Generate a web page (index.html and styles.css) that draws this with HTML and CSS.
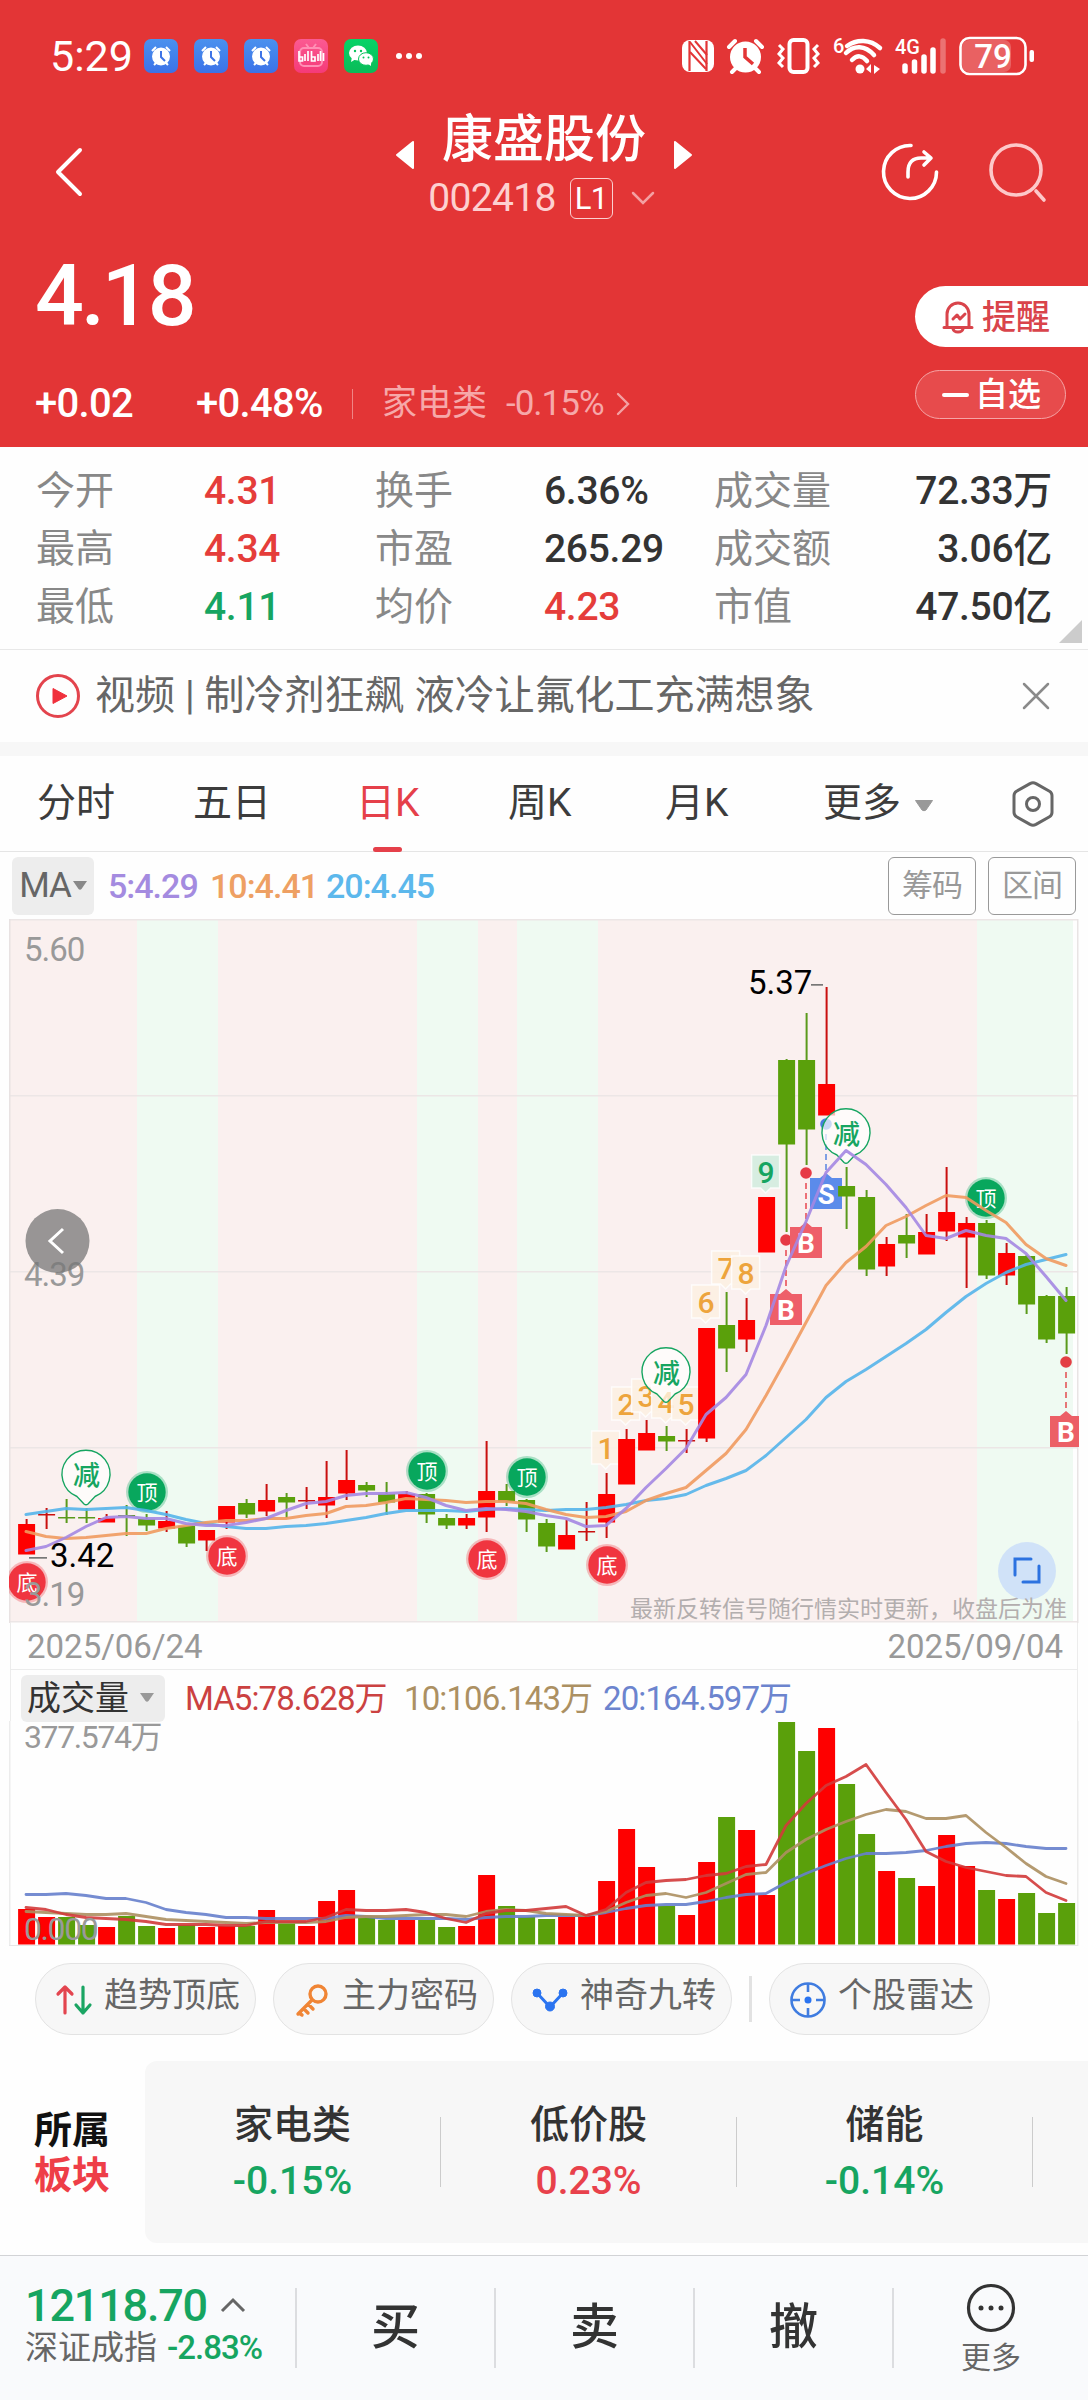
FILE: index.html
```html
<!DOCTYPE html>
<html lang="zh-CN">
<head>
    <meta charset="utf-8">
    <title>康盛股份 002418</title>
    <link rel="stylesheet" href="styles.css">
</head>
<body>
    <header class="header">
        <!-- System status bar -->
        <div class="status-bar">
            <span class="clock">5:29</span>
            <div class="apps">
                <svg class="app app-alarm" viewBox="0 0 34 34"><circle cx="17" cy="17.5" r="9" fill="#fff"/><path d="M8 12l4-4M26 12l-4-4M10 26l3-3M24 26l-3-3" stroke="#fff" stroke-width="2"/><path d="M17 12v6l4 4" fill="none" stroke="#3f74e6" stroke-width="2"/></svg>
                <svg class="app app-alarm" viewBox="0 0 34 34"><circle cx="17" cy="17.5" r="9" fill="#fff"/><path d="M8 12l4-4M26 12l-4-4M10 26l3-3M24 26l-3-3" stroke="#fff" stroke-width="2"/><path d="M17 12v6l4 4" fill="none" stroke="#3f74e6" stroke-width="2"/></svg>
                <svg class="app app-alarm" viewBox="0 0 34 34"><circle cx="17" cy="17.5" r="9" fill="#fff"/><path d="M8 12l4-4M26 12l-4-4M10 26l3-3M24 26l-3-3" stroke="#fff" stroke-width="2"/><path d="M17 12v6l4 4" fill="none" stroke="#3f74e6" stroke-width="2"/></svg>
                <svg class="app app-bili" viewBox="0 0 34 34"><rect x="6" y="9" width="22" height="18" rx="4" fill="none" stroke="#ff8fb5" stroke-width="2"/><path d="M12 5l3 4M22 5l-3 4" stroke="#ff8fb5" stroke-width="2"/><path d="M5 12v10h3.500v-4H5M11 15v7M14 12v10M17.500 12v10h3.500v-4h-3.500M24 15v7M26.500 12v10M29.500 14v8" fill="none" stroke="#fff" stroke-width="1.700"/></svg>
                <svg class="app app-wechat" viewBox="0 0 34 34"><ellipse cx="14" cy="14" rx="9" ry="7.500" fill="#fff"/><path d="M8 18l-1 5 5-3z" fill="#fff"/><ellipse cx="22" cy="20" rx="7.500" ry="6.300" fill="#fff" stroke="#08c45c"/><path d="M24 25l3 2v-4z" fill="#fff"/><circle cx="11" cy="12" r="1.200" fill="#08c45c"/><circle cx="17" cy="12" r="1.200" fill="#08c45c"/><circle cx="19.500" cy="18.500" r="1" fill="#08c45c"/><circle cx="24.500" cy="18.500" r="1" fill="#08c45c"/></svg>
                <svg width="26" height="34" viewBox="0 0 26 34" fill="#fff"><circle cx="5" cy="17" r="3"/><circle cx="15" cy="17" r="3"/><circle cx="25" cy="17" r="3"/></svg>
            </div>
            <div class="system">
                <svg width="32" height="34" viewBox="0 0 32 34"><rect y="1" width="32" height="32" rx="8" fill="#fff"/><path d="M7.500 2v30M24.500 2v30" stroke="#e33536" stroke-width="2.200"/><path d="M8 3l17 22M8 13l16 17M13 2l12 14" fill="none" stroke="#e33536" stroke-width="2"/></svg>
                <svg width="37" height="38" viewBox="0 0 37 38"><circle cx="18.500" cy="20" r="15.500" fill="#fff"/><path d="M2 10l6-6M35 10l-6-6M5 35l4-4M32 35l-4-4" stroke="#fff" stroke-width="4" stroke-linecap="round"/><path d="M18 11v9l8 7" fill="none" stroke="#e33536" stroke-width="3.500"/></svg>
                <svg width="43" height="38" viewBox="0 0 43 38" fill="none" stroke="#fff"><rect x="12.500" y="3" width="18" height="32" rx="4" stroke-width="4"/><path d="M2 8l4 4-4 5 4 4-4 5 4 4M41 8l-4 4 4 5-4 4 4 5-4 4" stroke-width="3"/></svg>
                <svg width="49" height="40" viewBox="0 0 49 40" fill="none" stroke="#fff" stroke-width="4.500" stroke-linecap="round"><path d="M14 10c10-7 23-7 33 2M13 17c8-8 19-8 28 2M19 24c5-5 10-5 15 1"/><circle cx="27" cy="33" r="4.500" fill="#fff" stroke="none"/><path d="M33 33l5-5v9zM41 29l6 4-6 5z" fill="#fff" stroke="none"/><text class="tiny" x="0" y="17">6</text></svg>
                <svg width="51" height="40" viewBox="0 0 51 40" fill="none" stroke="#fff" stroke-width="5.500" stroke-linecap="round"><path d="M10 30v5M19.500 26v9M29 21v14M38 14v21"/><path d="M48 5v30" stroke-opacity=".3"/><text class="tiny" x="0" y="18">4G</text></svg>
                <svg width="76" height="40" viewBox="0 0 76 40"><rect x="3" y="4" width="49" height="32" rx="7" fill="#fff" fill-opacity=".22"/><rect x="1.500" y="2" width="65" height="36" rx="9" fill="none" stroke="#fff" stroke-width="2.600"/><rect x="70.500" y="14" width="4.500" height="12" rx="2" fill="#fff"/><text class="battery" x="34" y="31.500">79</text></svg>
            </div>
        </div>

        <!-- Stock name and navigation -->
        <div class="title-bar">
            <svg class="back" width="28" height="48" viewBox="0 0 28 48"><path d="M25 2L3 24l22 22" fill="none" stroke="#fff" stroke-width="4" stroke-linecap="round" stroke-linejoin="round"/></svg>
            <div class="stock">
                <div class="stock-name">
                    <svg width="18" height="28" viewBox="0 0 18 28"><path d="M17 1v26L1 14z" fill="#fff" stroke="#fff" stroke-width="2" stroke-linejoin="round"/></svg>
                    <span>康盛股份</span>
                    <svg width="18" height="28" viewBox="0 0 18 28"><path d="M1 1v26l16-13z" fill="#fff" stroke="#fff" stroke-width="2" stroke-linejoin="round"/></svg>
                </div>
                <div class="stock-code">
                    <span>002418</span>
                    <span class="level">L1</span>
                    <svg width="24" height="14" viewBox="0 0 24 14"><path d="M2 2l10 10L22 2" fill="none" stroke="#f4a0a2" stroke-width="2.500" stroke-linecap="round"/></svg>
                </div>
            </div>
            <div class="tools">
                <svg width="58" height="60" viewBox="0 0 58 60" fill="none" stroke="#fff" stroke-width="3.600" stroke-linecap="round" stroke-linejoin="round"><path d="M30 3.500A26.500 26.500 0 1 0 55.500 30"/><path d="M27 35v-5c0-10 5-14 13-14h9M43 10l7 6-7 7"/></svg>
                <svg width="58" height="60" viewBox="0 0 58 60" fill="none" stroke="#fdc8c9" stroke-width="3.600" stroke-linecap="round"><circle cx="27" cy="28" r="25"/><path d="M47 49l8 9"/></svg>
            </div>
        </div>

        <!-- Price -->
        <div class="quote">
            <div class="quote-left">
                <div class="price">4.18</div>
                <div class="change">
                    <span class="diff">+0.02</span>
                    <span class="percent">+0.48%</span>
                    <span class="industry">家电类</span>
                    <span class="industry-percent">-0.15%</span>
                    <svg width="14" height="24" viewBox="0 0 14 24"><path d="M2 2l10 10L2 22" fill="none" stroke="#f3a1a3" stroke-width="2.400" stroke-linecap="round"/></svg>
                </div>
            </div>
            <div class="quote-right">
                <div class="remind">
                    <svg width="32" height="34" viewBox="0 0 32 34" fill="none" stroke="#d9444b" stroke-width="3" stroke-linejoin="round" stroke-linecap="round"><path d="M5 27V14a11 11 0 0 1 22 0v13M2 27.500h28M11 29c1 4 9 4 10 0M11 19l4-4 3 4 5-5"/></svg>
                    <span>提醒</span>
                </div>
                <div class="favorite"><i class="minus"></i><span>自选</span></div>
            </div>
        </div>
    </header>

    <section class="stats">
        <span class="label">今开</span><span class="up">4.31</span>
        <span class="label">换手</span><span>6.36%</span>
        <span class="label">成交量</span><span class="last">72.33万</span>
        <span class="label">最高</span><span class="up">4.34</span>
        <span class="label">市盈</span><span>265.29</span>
        <span class="label">成交额</span><span class="last">3.06亿</span>
        <span class="label">最低</span><span class="down">4.11</span>
        <span class="label">均价</span><span class="up">4.23</span>
        <span class="label">市值</span><span class="last">47.50亿</span>
        <i class="corner"></i>
    </section>

    <section class="news">
        <svg width="46" height="46" viewBox="0 0 46 46"><circle cx="23" cy="23" r="20.500" fill="none" stroke="#e3444d" stroke-width="3"/><path d="M18 15.500v15L32 23z" fill="#f0303c" stroke="#f0303c" stroke-linejoin="round"/></svg>
        <span class="news-text">视频 | 制冷剂狂飙 液冷让氟化工充满想象</span>
        <svg width="28" height="28" viewBox="0 0 28 28"><path d="M2 2l24 24M26 2L2 26" stroke="#8a8a8a" stroke-width="2.500" stroke-linecap="round"/></svg>
    </section>

    <nav class="tabs">
        <span>分时</span>
        <span>五日</span>
        <span class="active">日K</span>
        <span>周K</span>
        <span>月K</span>
        <span>更多 <svg width="20" height="13" viewBox="0 0 20 13"><path d="M1.500 1.500h17L12 11q-2 1.500-4 0z" fill="#999" stroke="#999" stroke-linejoin="round"/></svg></span>
        <svg class="gear" width="42" height="46" viewBox="0 0 42 46" fill="none" stroke="#666" stroke-width="3" stroke-linejoin="round"><path d="M18 2.600q3-1.500 6 0l13.500 7.700q2.500 1.500 2.500 4.500v16.400q0 3-2.500 4.500L24 43.400q-3 1.500-6 0L4.500 35.700Q2 34.200 2 31.200V14.800q0-3 2.500-4.500z"/><circle cx="21" cy="23" r="6.500"/></svg>
    </nav>

    <div class="ma-bar">
        <span class="ma-button">MA<svg width="14" height="10" viewBox="0 0 14 10"><path d="M0 0h14L8.500 8q-1.500 1.500-3 0z" fill="#888"/></svg></span>
        <span class="ma5">5:4.29</span>
        <span class="ma10">10:4.41</span>
        <span class="ma20">20:4.45</span>
        <span class="box-button">筹码</span>
        <span class="box-button">区间</span>
    </div>

    <!-- Candlestick chart, drawn by chart.js -->
    <svg class="kline" id="kline" viewBox="0 919 1088 704"></svg>

    <div class="dates"><span>2025/06/24</span><span>2025/09/04</span></div>

    <div class="volume-bar">
        <span class="volume-button">成交量<svg width="14" height="10" viewBox="0 0 14 10"><path d="M0 0h14L8.500 8q-1.500 1.500-3 0z" fill="#999"/></svg></span>
        <span class="vol5">MA5:78.628万</span>
        <span class="vol10">10:106.143万</span>
        <span class="vol20">20:164.597万</span>
    </div>
    <svg class="volume" id="volume" viewBox="0 1721 1088 226"></svg>

    <div class="chips">
        <span class="chip">
            <svg width="36" height="30" viewBox="0 0 36 30" fill="none" stroke-width="3.200" stroke-linecap="round" stroke-linejoin="round"><path d="M9 28V2M2 9l7-7 7 7" stroke="#e3454f"/><path d="M27 2v26M20 20l7 8 7-8" stroke="#1aa563"/></svg>
            趋势顶底
        </span>
        <span class="chip">
            <svg width="36" height="34" viewBox="0 0 36 34" fill="none" stroke="#f08535" stroke-width="3.400" stroke-linecap="round"><circle cx="24" cy="11" r="8"/><path d="M18 17L4 31M10 26l4 4M14 21l5 5M5 30l3 2"/></svg>
            主力密码
        </span>
        <span class="chip">
            <svg width="36" height="24" viewBox="0 0 36 24" fill="#2b74f0" stroke="#2b74f0"><path d="M5 5l13 14L31 5" fill="none" stroke-width="3"/><circle cx="5" cy="5" r="4"/><circle cx="18" cy="18.500" r="4.500"/><circle cx="31" cy="5" r="4"/></svg>
            神奇九转
        </span>
        <i class="chip-line"></i>
        <span class="chip">
            <svg width="36" height="36" viewBox="0 0 36 36" fill="none" stroke="#3f7ce0" stroke-width="2.600"><circle cx="18" cy="18" r="16.500"/><path d="M18 2v8M18 26v8M2 18h8M26 18h8"/><circle cx="18" cy="18" r="3.500" fill="#2b74f0" stroke="none"/></svg>
            个股雷达
        </span>
    </div>

    <section class="sectors">
        <div class="sectors-title"><div>所属</div><div class="red">板块</div></div>
        <div class="sectors-list">
            <div class="sector"><span>家电类</span><span class="down">-0.15%</span></div>
            <div class="sector"><span>低价股</span><span class="red">0.23%</span></div>
            <div class="sector"><span>储能</span><span class="down">-0.14%</span></div>
        </div>
    </section>

    <footer class="footer">
        <div class="index">
            <div class="index-value">12118.70 <svg width="26" height="16" viewBox="0 0 26 16"><path d="M2 14L13 3l11 11" fill="none" stroke="#666" stroke-width="3"/></svg></div>
            <div class="index-name">深证成指<span>-2.83%</span></div>
        </div>
        <div class="trade">买</div>
        <div class="trade">卖</div>
        <div class="trade">撤</div>
        <div class="more">
            <svg width="50" height="50" viewBox="0 0 50 50"><circle cx="25" cy="25" r="22.500" fill="none" stroke="#333" stroke-width="3.200"/><circle cx="15" cy="25" r="2.500" fill="#333"/><circle cx="25" cy="25" r="2.500" fill="#333"/><circle cx="35" cy="25" r="2.500" fill="#333"/></svg>
            <span>更多</span>
        </div>
    </footer>
    <script src="chart.js"></script>
</body>
</html>
```
FILE: styles.css
```css
* {
    box-sizing: border-box;
}
body {
    margin: 0;
    width: 1088px;
    height: 2400px;
    overflow: hidden;
    background: #fefefe;
    color: #333;
    font-family: Roboto, "Noto Sans CJK SC", sans-serif;
    font-size: 39px;
    line-height: 1;
}
svg {
    display: block;
    flex: none;
    overflow: visible;
}
span {
    white-space: nowrap;
}
.up {
    color: #e53d3a;
}
.down {
    color: #16a561;
}
.red {
    color: #e8414b;
}

/* Red header */
.header {
    height: 447px;
    background: #e33536;
    color: #fff;
}
.status-bar {
    display: flex;
    align-items: center;
    height: 112px;
    padding: 0 53px 0 50px;
}
.clock {
    width: 94px;
    font-size: 43px;
}
.apps {
    display: flex;
    gap: 16px;
}
.app {
    width: 34px;
    height: 34px;
    border-radius: 7px;
}
.app-alarm {
    background: linear-gradient(#4a91ee, #3b72e8);
}
.app-bili {
    background: linear-gradient(#fb5a92, #f53a78);
}
.app-wechat {
    background: linear-gradient(#06d367, #0abb58);
}
.system {
    display: flex;
    align-items: center;
    gap: 13px;
    margin-left: auto;
}
.tiny {
    font-size: 20px;
    font-weight: 500;
    fill: #fff;
    stroke: none;
}
.battery {
    font-size: 33px;
    font-weight: 500;
    fill: #fff;
    text-anchor: middle;
}
.title-bar {
    display: grid;
    grid-template-columns: 300px 488px 300px;
    height: 110px;
}
.back {
    margin: 36px 0 0 55px;
}
.stock-name {
    display: flex;
    justify-content: center;
    align-items: center;
    gap: 28px;
    height: 54px;
    font-size: 51px;
    font-weight: 500;
}
.stock-name svg {
    margin-top: 32px;
}
.stock-code {
    display: flex;
    align-items: center;
    justify-content: center;
    height: 64px;
    padding-right: 5px;
    color: #fdd0d0;
    font-size: 39px;
    letter-spacing: -.7px;
}
.level {
    width: 43px;
    height: 41px;
    margin: 0 18px 0 14px;
    border: 1.5px solid #fbd0d0;
    border-radius: 6px;
    color: #fff;
    font-size: 31px;
    line-height: 39px;
    text-align: center;
}
.tools {
    display: flex;
    gap: 50px;
    padding: 30px 0 0 93px;
}
.quote {
    display: flex;
    justify-content: space-between;
    height: 225px;
}
.quote-left {
    padding-left: 35px;
}
.price {
    height: 144px;
    font-size: 86px;
    font-weight: 500;
    line-height: 148px;
    letter-spacing: -3px;
}
.change {
    display: flex;
    align-items: center;
    height: 75px;
    font-size: 40px;
    font-weight: 500;
    letter-spacing: -.7px;
}
.diff {
    width: 161px;
}
.percent {
    width: 157px;
    border-right: 1px solid #f08585;
    line-height: 30px;
}
.industry {
    margin-left: 29px;
    color: #f6a8a9;
    font-size: 35px;
    font-weight: 400;
    letter-spacing: 0;
}
.industry-percent {
    margin: 0 12px 0 19px;
    color: #f6a8a9;
    font-size: 35px;
    font-weight: 400;
    letter-spacing: -1px;
}
.quote-right {
    width: 173px;
    padding-top: 64px;
}
.remind {
    display: flex;
    align-items: center;
    gap: 8px;
    height: 61px;
    padding-left: 27px;
    border-radius: 31px 0 0 31px;
    background: #fff;
    color: #d9444b;
    font-size: 34px;
    font-weight: 500;
}
.favorite {
    display: flex;
    align-items: center;
    width: 151px;
    height: 49px;
    margin-top: 23px;
    padding-left: 26px;
    gap: 6px;
    border: 1px solid #f5a5a6;
    border-radius: 25px;
    background: #e74b4c;
    font-size: 33px;
    font-weight: 500;
}
.minus {
    width: 27px;
    height: 4px;
    border-radius: 2px;
    background: #fff;
}

/* Key numbers */
.stats {
    position: relative;
    display: grid;
    grid-template-columns: 168px 171px 169px 170px 130px 1fr;
    grid-auto-rows: 58px;
    align-items: center;
    height: 202px;
    padding: 15px 36px 0 36px;
    font-weight: 500;
    letter-spacing: -.3px;
}
.stats .label {
    color: #888;
    font-weight: 400;
    letter-spacing: 0;
}
.stats .last {
    text-align: right;
}
.corner {
    position: absolute;
    right: 6px;
    bottom: 6px;
    border-left: 23px solid transparent;
    border-bottom: 23px solid #ccc;
}

/* News line */
.news {
    display: flex;
    align-items: center;
    height: 107px;
    padding: 0 38px 0 35px;
    border-top: 1px solid #e8e8e8;
    border-bottom: 14px solid #f7f7f7;
    color: #666;
    font-size: 40px;
}
.news-text {
    margin: 0 auto 0 14px;
}

/* Period tabs */
.tabs {
    display: grid;
    grid-template-columns: 156px 163px 152px 157px 158px 190px auto;
    align-items: center;
    height: 96px;
    padding-left: 37px;
    border-bottom: 1px solid #e5e5e5;
    color: #3c3c3c;
}
.tabs span svg {
    display: inline-block;
    margin-left: 3px;
    vertical-align: 4px;
}
.tabs .active {
    position: relative;
    color: #e5404a;
}
.active::after {
    content: "";
    position: absolute;
    left: 17px;
    bottom: -29px;
    width: 29px;
    height: 5px;
    border-radius: 3px;
    background: #e5404a;
}
.gear {
    margin-left: -1px;
}

/* Moving average line */
.ma-bar {
    display: flex;
    align-items: center;
    height: 67px;
    padding: 0 12px;
    font-size: 34px;
    font-weight: 500;
    letter-spacing: -1px;
}
.ma-button {
    display: flex;
    align-items: center;
    justify-content: center;
    gap: 2px;
    width: 82px;
    height: 58px;
    margin-right: 14px;
    border-radius: 6px;
    background: #ededed;
    color: #666;
    font-size: 35px;
    font-weight: 400;
}
.ma5 {
    width: 102px;
    color: #a48be0;
}
.ma10 {
    width: 116px;
    color: #eea063;
}
.ma20 {
    margin-right: auto;
    color: #5cb8ec;
}
.box-button {
    width: 88px;
    height: 58px;
    margin-left: 12px;
    border: 1px solid #999;
    border-radius: 6px;
    color: #999;
    font-size: 31px;
    font-weight: 400;
    line-height: 55px;
    text-align: center;
}

/* Charts */
.kline {
    width: 1088px;
    height: 704px;
}
.kline text,
.volume text {
    font-size: 33px;
}
.axis {
    fill: #999;
    letter-spacing: -1px;
}
.kline .notice {
    fill: #b3aeae;
    font-size: 23px;
    text-anchor: end;
}
.kline .dot-text {
    fill: #fff;
    font-size: 21px;
    text-anchor: middle;
}
.kline .pin-text {
    fill: #16a561;
    font-size: 27px;
    font-weight: 500;
    text-anchor: middle;
}
.kline .count {
    font-size: 30px;
    font-weight: 500;
    text-anchor: middle;
}
.kline .trade-mark {
    fill: #fff;
    font-size: 28px;
    font-weight: 700;
    text-anchor: middle;
}
.dates,
.volume-bar {
    width: 1068px;
    margin-left: 10px;
    border: solid #ececec;
}
.dates {
    display: flex;
    justify-content: space-between;
    align-items: center;
    height: 46px;
    padding: 0 14px 0 16px;
    border-width: 0 1px;
    color: #999;
    font-size: 33px;
}
.volume-bar {
    display: flex;
    align-items: center;
    height: 52px;
    border-width: 1px 1px 0;
    padding: 5px 0 0 10px;
    font-size: 33px;
    letter-spacing: -.9px;
}
.volume-button {
    display: flex;
    align-items: center;
    gap: 11px;
    width: 144px;
    height: 47px;
    padding-left: 6px;
    margin-right: 20px;
    border-radius: 6px;
    background: #ededed;
    font-size: 34px;
    letter-spacing: 0;
}
.vol5 {
    width: 219px;
    color: #cb4141;
}
.vol10 {
    width: 199px;
    color: #ac9062;
}
.vol20 {
    color: #6c84ce;
}
.volume {
    width: 1088px;
    height: 226px;
}
.volume .axis {
    font-size: 32px;
    letter-spacing: -1.4px;
}

/* Feature chips */
.chips {
    display: flex;
    align-items: center;
    gap: 17px;
    height: 72px;
    margin-top: 16px;
    padding-left: 35px;
}
.chip {
    display: flex;
    align-items: center;
    gap: 12px;
    width: 221px;
    height: 72px;
    padding: 0 0 8px 20px;
    border: 1px solid #e3e3e3;
    border-radius: 36px;
    background: #f7f7f7;
    color: #666;
    font-size: 34px;
}
.chip svg {
    position: relative;
    top: 5px;
}
.chip-line {
    width: 3px;
    height: 46px;
    background: #e2e2e2;
}

/* Sectors */
.sectors {
    display: flex;
    height: 182px;
    margin-top: 26px;
}
.sectors-title {
    width: 145px;
    padding: 47px 0 0 34px;
    color: #111;
    font-size: 38px;
    font-weight: 700;
    line-height: 45px;
}
.sectors-title .red {
    color: #ee3e48;
}
.sectors-list {
    display: flex;
    flex: 1;
    align-items: center;
    border-radius: 12px 0 0 12px;
    background: #f7f7f7;
}
.sector {
    display: flex;
    flex-direction: column;
    justify-content: center;
    align-items: center;
    gap: 17px;
    width: 296px;
    height: 70px;
    padding-top: 2px;
    border-right: 1px solid #ccc;
    font-weight: 500;
}

/* Bottom bar */
.footer {
    display: flex;
    align-items: center;
    height: 145px;
    margin-top: 12px;
    border-top: 1px solid #d2d3d6;
    background: #f9fafc;
}
.index {
    width: 297px;
    height: 80px;
    padding-left: 25px;
    border-right: 2px solid #dcdde0;
}
.index-value {
    display: flex;
    align-items: center;
    gap: 13px;
    height: 34px;
    color: #16a561;
    font-size: 45px;
    font-weight: 500;
    letter-spacing: -1.2px;
}
.index-name {
    display: flex;
    align-items: center;
    gap: 10px;
    margin-top: 9px;
    color: #666;
    font-size: 33px;
}
.index-name span {
    color: #16a561;
    font-weight: 500;
    letter-spacing: -1px;
}
.trade {
    width: 199px;
    height: 80px;
    border-right: 2px solid #dcdde0;
    font-size: 49px;
    font-weight: 500;
    line-height: 80px;
    text-align: center;
}
.more {
    display: flex;
    flex-direction: column;
    align-items: center;
    gap: 10px;
    width: 194px;
    color: #666;
    font-size: 30px;
}
```
FILE: chart.js
```js
// [color, wick top, body top, body bottom, wick bottom]
var candles = [
    ['r', 1519, 1524, 1554, 1554], ['r', 1508, 1514, 1516, 1529], ['g', 1499, 1517, 1519, 1523],
    ['g', 1508, 1517, 1519, 1523], ['r', 1514, 1518, 1522, 1522], ['g', 1505, 1515, 1517, 1536],
    ['g', 1514, 1519, 1525, 1531], ['r', 1511, 1521, 1528, 1532], ['g', 1526, 1526, 1543, 1547],
    ['r', 1530, 1530, 1540, 1551], ['r', 1506, 1506, 1522, 1529], ['g', 1499, 1503, 1514, 1518],
    ['r', 1484, 1500, 1511, 1516], ['g', 1493, 1497, 1502, 1518], ['r', 1487, 1500, 1502, 1509],
    ['r', 1461, 1497, 1505, 1518], ['r', 1450, 1480, 1493, 1500], ['g', 1482, 1485, 1490, 1497],
    ['g', 1482, 1494, 1502, 1515], ['r', 1491, 1494, 1509, 1509], ['g', 1493, 1494, 1514, 1523],
    ['g', 1514, 1518, 1525, 1529], ['r', 1514, 1518, 1525, 1529], ['r', 1441, 1491, 1517, 1532],
    ['g', 1484, 1491, 1501, 1506], ['g', 1499, 1500, 1519, 1532], ['g', 1519, 1523, 1546, 1552],
    ['r', 1520, 1535, 1549, 1549], ['r', 1502, 1531, 1533, 1541], ['r', 1473, 1494, 1522, 1538],
    ['r', 1429, 1439, 1484, 1484], ['r', 1420, 1433, 1450, 1450], ['g', 1426, 1436, 1441, 1451],
    ['r', 1429, 1440, 1442, 1453], ['r', 1328, 1328, 1438, 1442], ['g', 1292, 1325, 1348, 1372],
    ['r', 1298, 1320, 1339, 1352], ['r', 1197, 1197, 1252, 1252], ['g', 1059, 1060, 1144, 1232],
    ['g', 1013, 1060, 1129, 1165], ['r', 987, 1084, 1115, 1115], ['g', 1167, 1186, 1196, 1229],
    ['g', 1190, 1197, 1269, 1276], ['r', 1237, 1244, 1266, 1276], ['g', 1214, 1235, 1243, 1258],
    ['r', 1214, 1232, 1254, 1254], ['r', 1167, 1212, 1231, 1241], ['r', 1217, 1223, 1237, 1288],
    ['g', 1220, 1223, 1275, 1279], ['r', 1243, 1253, 1275, 1285], ['g', 1255, 1256, 1304, 1314],
    ['g', 1295, 1296, 1339, 1343], ['g', 1287, 1296, 1333, 1354]
];
var ma5 = [1550, 1546, 1537, 1526, 1517, 1516, 1518, 1518, 1523, 1525, 1525, 1522, 1518, 1510, 1503, 1501, 1495, 1493, 1493, 1492, 1497, 1505, 1510, 1508, 1509, 1511, 1515, 1518, 1526, 1525, 1508, 1487, 1468, 1448, 1414, 1397, 1374, 1325, 1266, 1221, 1172, 1150, 1164, 1184, 1207, 1235, 1238, 1230, 1235, 1238, 1253, 1276, 1300];
var ma10 = [1531, 1536, 1538, 1537, 1535, 1533, 1533, 1528, 1525, 1522, 1520, 1520, 1518, 1518, 1515, 1513, 1506, 1505, 1502, 1498, 1499, 1500, 1502, 1501, 1501, 1503, 1509, 1514, 1517, 1516, 1511, 1500, 1493, 1487, 1470, 1453, 1429, 1395, 1359, 1322, 1285, 1262, 1246, 1225, 1216, 1205, 1195, 1197, 1210, 1222, 1244, 1258, 1265];
var ma20 = [1514, 1511, 1508, 1509, 1508, 1507, 1510, 1514, 1519, 1523, 1526, 1528, 1528, 1526, 1525, 1523, 1520, 1517, 1513, 1510, 1510, 1510, 1511, 1509, 1508, 1509, 1510, 1509, 1509, 1507, 1504, 1500, 1498, 1494, 1485, 1478, 1470, 1455, 1437, 1419, 1397, 1381, 1369, 1356, 1343, 1329, 1312, 1296, 1283, 1272, 1264, 1259, 1254];

// tops of the volume bars, the axis is at 1945
var volumes = [1909, 1917, 1917, 1925, 1927, 1916, 1926, 1928, 1925, 1927, 1926, 1926, 1910, 1923, 1926, 1901, 1890, 1918, 1920, 1920, 1920, 1927, 1926, 1875, 1906, 1917, 1919, 1917, 1916, 1881, 1829, 1867, 1906, 1915, 1862, 1817, 1830, 1895, 1722, 1751, 1728, 1784, 1834, 1871, 1878, 1886, 1835, 1866, 1890, 1899, 1893, 1913, 1903];
var vol5 = [1907, 1909, 1914, 1917, 1918, 1919, 1921, 1924, 1924, 1924, 1925, 1925, 1921, 1921, 1921, 1917, 1909, 1910, 1910, 1909, 1912, 1918, 1922, 1913, 1910, 1910, 1908, 1906, 1915, 1909, 1892, 1882, 1880, 1879, 1875, 1873, 1866, 1864, 1825, 1803, 1785, 1776, 1764, 1792, 1819, 1851, 1861, 1867, 1871, 1875, 1876, 1892, 1900];
var vol10 = [1911, 1912, 1913, 1914, 1914, 1913, 1916, 1919, 1920, 1921, 1922, 1923, 1922, 1922, 1922, 1921, 1917, 1916, 1916, 1915, 1914, 1914, 1916, 1911, 1909, 1910, 1913, 1914, 1915, 1911, 1902, 1895, 1893, 1897, 1892, 1883, 1874, 1872, 1852, 1839, 1829, 1821, 1814, 1809, 1811, 1818, 1818, 1815, 1832, 1847, 1863, 1876, 1883];
var vol20 = [1894, 1894, 1893, 1895, 1898, 1898, 1902, 1909, 1912, 1914, 1917, 1917, 1918, 1918, 1918, 1918, 1915, 1916, 1918, 1918, 1918, 1918, 1919, 1917, 1916, 1916, 1915, 1915, 1915, 1912, 1908, 1905, 1904, 1904, 1901, 1897, 1894, 1893, 1882, 1873, 1865, 1858, 1853, 1853, 1852, 1850, 1846, 1843, 1842, 1843, 1846, 1848, 1848];

function x(i) {
    return 26.6 + i * 20;
}

function rect(left, top, width, height, fill) {
    return '<rect x="' + left + '" y="' + top + '" width="' + width + '" height="' + height + '" fill="' + fill + '"/>';
}

function text(cls, left, top, value, fill) {
    return '<text class="' + cls + '" x="' + left + '" y="' + top + '"' + (fill ? ' fill="' + fill + '"' : '') + '>' + value + '</text>';
}

function line(values, color, width) {
    var points = values.map(function (y, i) {
        return (26 + i * 20) + ',' + (y + .5);
    });
    return '<polyline points="' + points.join(' ') + '" fill="none" stroke="' + color + '" stroke-width="' + width + '" stroke-linejoin="round" stroke-linecap="round" stroke-opacity=".9"/>';
}

// round 顶 / 底 badge
function badge(cx, cy, label, color) {
    return '<circle cx="' + cx + '" cy="' + cy + '" r="21" fill="' + color + '" fill-opacity=".3"/>' +
        '<circle cx="' + cx + '" cy="' + cy + '" r="18.7" fill="' + color + '"/>' +
        text('dot-text', cx, cy + 8, label);
}

// 减 pin with a tip under it
function pin(cx, cy) {
    return '<path d="M' + (cx - 9) + ' ' + (cy + 22.5) + 'A24 24 0 1 1 ' + (cx + 9) + ' ' + (cy + 22.5) + 'L' + (cx + 2) + ' ' + (cy + 30) + 'q-2 1.500 -4 0z" fill="#fff" fill-opacity=".7" stroke="#16a561" stroke-width="1.4"/>' +
        text('pin-text', cx + .5, cy + 11, '减');
}

// numbered label of the nine-count
function count(i, tip, green) {
    var left = x(i) - 15, top = tip - 38;
    return '<path d="M' + left + ' ' + top + 'h28v33h-9l-5 5-5-5h-9z" fill="' + (green ? '#d3ecdf' : '#fcefe2') + '" stroke="#fff" stroke-opacity=".8" stroke-width="1.5" fill-opacity=".9"/>' +
        text('count', x(i) - .5, top + 27.5, i - 28, green ? '#16a561' : '#eda43c');
}

// B / S mark with a dashed line to its dot
function mark(cx, dot, top, label, color, dotColor) {
    return '<path d="M' + cx + ' ' + (dot + 10) + 'V' + (top - 6) + '" stroke="' + dotColor + '" stroke-width="1.4" stroke-dasharray="6 4"/>' +
        '<circle cx="' + cx + '" cy="' + dot + '" r="5.800" fill="' + dotColor + '"/>' +
        '<path d="M' + (cx - 16) + ' ' + top + 'h10l6-5 6 5h10v31h-32z" fill="' + color + '"/>' +
        text('trade-mark', cx, top + 26, label);
}

function drawKline() {
    var out = rect(10, 919, 1063, 703, '#faf0ef');
    [[137, 218], [417, 478], [517, 598], [977, 1073]].forEach(function (band) {
        out += rect(band[0], 919, band[1] - band[0], 703, '#effaf2');
    });
    [919, 1095, 1271, 1447, 1621].forEach(function (y) {
        out += rect(10, y, 1068, 1.5, '#ece6e6');
    });
    out += rect(9, 919, 1.5, 704, '#e8e2e2') + rect(1077, 919, 1.5, 704, '#e8e4e4');
    out += text('axis', 24, 961, '5.60') + text('axis', 24, 1286, '4.39');

    out += mark(786, 1240, 1294, 'B', '#ee5f69', '#e63a45');
    out += mark(806, 1173, 1227, 'B', '#ee5f69', '#e63a45');
    out += mark(826, 1124, 1178, 'S', '#5b8bea', '#4b7de0');
    // the last mark is cut by the chart border
    out += mark(1066, 1362, 1416, 'B', '#ec5f66', '#e33f44').replace('h10v31h-32z', 'h7v31h-29z');
    [1469, 1425, 1417, 1423, 1425, 1323, 1289, 1294].forEach(function (tip, k) {
        out += count(29 + k, tip, false);
    });
    out += count(37, 1193, true);

    candles.forEach(function (c, i) {
        var fill = c[0] === 'r' ? '#fe0000' : '#5aa00b';
        var wick = c[0] === 'r' ? '#c9100f' : '#5a9a1c';
        // a flat candle is only a thin cross
        var flat = c[3] - c[2] < 3;
        out += rect(x(i) - 1, c[1], 2, c[4] - c[1], wick);
        out += rect(x(i) - 8.5, c[2], 17, flat ? 1.5 : c[3] - c[2] + .5, flat ? wick : fill);
    });

    out += pin(86, 1474) + pin(666, 1371.5) + pin(846, 1132.5);
    out += badge(147, 1492, '顶', '#08a75d') + badge(427, 1471, '顶', '#08a75d') + badge(527, 1477, '顶', '#08a75d') + badge(986, 1198, '顶', '#08a75d');
    out += badge(27, 1582, '底', '#f03540') + badge(227, 1556, '底', '#f03540') + badge(487, 1559, '底', '#f03540') + badge(607, 1565, '底', '#f03540');
    out += rect(0, 1555, 9, 55, '#fefefe');
    out += line(ma20, '#54b4ea', 3) + line(ma10, '#f09a5f', 3) + line(ma5, '#a487e2', 3);

    out += rect(29, 1557, 18, 1.7, '#777') + text('', 50, 1567, '3.42', '#000');
    out += rect(811, 984, 12, 1.7, '#777') + text('', 748, 994, '5.37', '#000');
    out += text('axis', 24, 1606, '3.19');

    // previous-page and full-screen buttons
    out += '<circle cx="57.500" cy="1241" r="32" fill="#777" fill-opacity=".75"/><path d="M63 1229l-13 12 13 12" fill="none" stroke="#fff" stroke-width="3"/>';
    out += '<circle cx="1027" cy="1571" r="29" fill="#c5dafa" fill-opacity=".75"/><path d="M1015 1575v-16h16M1023 1582h16v-16" fill="none" stroke="#2c72e0" stroke-width="3" stroke-linecap="round"/>';
    out += text('notice', 1067, 1617, '最新反转信号随行情实时更新，收盘后为准');
    document.getElementById('kline').innerHTML = out;
}

function drawVolume() {
    var out = rect(9, 1721, 1.5, 225, '#ececec') + rect(1077, 1721, 1.5, 225, '#ececec') + rect(9, 1945, 1069, 1, '#e6e6e6');
    volumes.forEach(function (top, i) {
        out += rect(x(i) - 8.5, top, 17, 1944.5 - top, candles[i][0] === 'r' ? '#fe0000' : '#5aa00b');
    });
    out += line(vol20, '#6680cc', 2.8) + line(vol10, '#ac8f60', 2.8) + line(vol5, '#d13a3a', 2.8);
    out += text('axis', 24, 1748, '377.574万') + text('axis', 24, 1940, '0.000');
    document.getElementById('volume').innerHTML = out;
}

drawKline();
drawVolume();
```
